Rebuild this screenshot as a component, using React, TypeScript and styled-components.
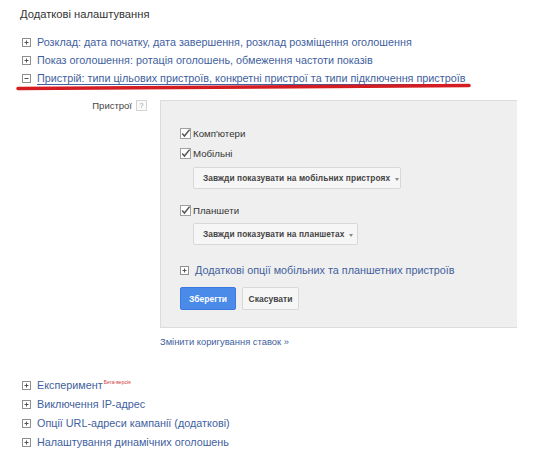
import styled, { createGlobalStyle } from "styled-components";

const Global = createGlobalStyle`
  html, body {
    margin: 0;
    padding: 0;
    background: #ffffff;
    font-family: "Liberation Sans", Arial, sans-serif;
  }
`;

const Page = styled.div`
  position: relative;
  width: 547px;
  height: 450px;
  overflow: hidden;
  padding-top: 6px;
  box-sizing: border-box;
`;

const Heading = styled.div`
  margin-left: 20px;
  font-size: 11.2px;
  line-height: 16px;
  color: #333333;
`;

const List = styled.div<{ $gap: number; $top: number }>`
  display: flex;
  flex-direction: column;
  margin: ${({ $top }) => $top}px 0 0 22px;
  gap: ${({ $gap }) => $gap}px;
`;

const Row = styled.div<{ $top?: number }>`
  display: flex;
  align-items: center;
  gap: 6px;
  height: 18px;
  margin-top: ${({ $top }) => $top ?? 0}px;
  color: #3f5f9e;
  white-space: nowrap;
`;

const RowText = styled.span<{ $under?: boolean }>`
  font-size: 10.8px;
  text-decoration: ${({ $under }) => ($under ? "underline" : "none")};
  text-underline-offset: 2px;
`;

const Beta = styled.sup`
  font-size: 5px;
  color: #d23b3b;
  vertical-align: 5px;
  margin-left: 1px;
`;

const Toggle = styled.span`
  display: inline-flex;
  flex: none;
  width: 9px;
  height: 9px;
`;

const RedLine = styled.svg`
  position: absolute;
  left: 15px;
  top: 82px;
`;

const Devices = styled.div`
  display: grid;
  grid-template-columns: 160px 357px;
  margin-top: 13px;
`;

const Label = styled.div`
  display: flex;
  justify-content: flex-end;
  align-items: flex-start;
  gap: 4px;
  padding-right: 13px;
  font-size: 9.5px;
  line-height: 12px;
  color: #444444;
`;

const Help = styled.span`
  display: inline-flex;
  align-items: center;
  justify-content: center;
  width: 9px;
  height: 9px;
  border: 1px solid #d4d4d4;
  font-size: 7px;
  line-height: 1;
  color: #9a9a9a;
  background: #fafafa;
`;

const Panel = styled.div`
  background: #efefef;
  border: 1px solid #dcdcdc;
  border-right: none;
  height: 228px;
  box-sizing: border-box;
  padding: 22px 0 0 19px;
  display: flex;
  flex-direction: column;
`;

const Check = styled.label<{ $top: number }>`
  display: flex;
  align-items: center;
  gap: 2px;
  height: 20px;
  margin-top: ${({ $top }) => $top}px;
  font-size: 9.7px;
  color: #333333;
`;

const Select = styled.div<{ $w: number; $top: number }>`
  display: flex;
  align-items: center;
  gap: 5px;
  box-sizing: border-box;
  width: ${({ $w }) => $w}px;
  height: 22px;
  margin: ${({ $top }) => $top}px 0 0 13px;
  padding-left: 9px;
  background: #f6f6f6;
  border: 1px solid #d8d8d8;
  border-radius: 2px;
  font-size: 8.3px;
  letter-spacing: 0.1px;
  font-weight: bold;
  color: #444444;
  white-space: nowrap;
`;

const Caret = styled.span`
  width: 0;
  height: 0;
  border-left: 2.5px solid transparent;
  border-right: 2.5px solid transparent;
  border-top: 3px solid #888888;
  margin-top: 2px;
`;

const Buttons = styled.div`
  display: flex;
  gap: 6px;
  margin-top: 8px;
`;

const Button = styled.button<{ $primary?: boolean }>`
  box-sizing: border-box;
  height: 23px;
  width: ${({ $primary }) => ($primary ? 56 : 57)}px;
  padding: 0;
  border-radius: 2px;
  font-family: "Liberation Sans", Arial, sans-serif;
  font-size: 8.5px;
  font-weight: bold;
  border: 1px solid ${({ $primary }) => ($primary ? "#3a7ae0" : "#d8d8d8")};
  background: ${({ $primary }) => ($primary ? "#4a8ae8" : "#f6f6f6")};
  color: ${({ $primary }) => ($primary ? "#ffffff" : "#444444")};
`;

const BidLink = styled.div`
  grid-column: 2;
  margin-top: 8px;
  font-size: 9.4px;
  color: #3f5f9e;
`;

function ToggleIcon({ open }: { open?: boolean }) {
  return (
    <Toggle>
      <svg width="9" height="9" viewBox="0 0 9 9">
        <rect x="0.5" y="0.5" width="8" height="8" fill="#fff" stroke="#8f8f8f" />
        <path d="M2.5 4.5h4" stroke="#555" />
        {!open && <path d="M4.5 2.5v4" stroke="#555" />}
      </svg>
    </Toggle>
  );
}

function CheckBox() {
  return (
    <svg width="11" height="11" viewBox="0 0 11 11">
      <rect x="0.5" y="0.5" width="10" height="10" fill="#fff" stroke="#a0a0a0" />
      <path d="M2.2 5.6 4.4 8 9.6 1.6" fill="none" stroke="#555" strokeWidth="1.5" />
    </svg>
  );
}

export default function App() {
  return (
    <>
      <Global />
      <Page>
        <Heading>Додаткові налаштування</Heading>
        <List $gap={0} $top={11}>
          <Row>
            <ToggleIcon />
            <RowText>Розклад: дата початку, дата завершення, розклад розміщення оголошення</RowText>
          </Row>
          <Row>
            <ToggleIcon />
            <RowText>Показ оголошення: ротація оголошень, обмеження частоти показів</RowText>
          </Row>
          <Row>
            <ToggleIcon open />
            <RowText $under>
              Пристрій: типи цільових пристроїв, конкретні пристрої та типи підключення пристроїв
            </RowText>
          </Row>
        </List>
        <RedLine width="460" height="10" viewBox="0 0 460 10">
          <path d="M3 6.5 C 120 5.5, 300 4.5, 454 3.5" stroke="#d31d22" strokeWidth="3.5" strokeLinecap="round" fill="none" />
        </RedLine>

        <Devices>
          <Label>
            Пристрої
            <Help>?</Help>
          </Label>
          <Panel>
            <Check $top={0}>
              <CheckBox />
              Комп'ютери
            </Check>
            <Check $top={0}>
              <CheckBox />
              Мобільні
            </Check>
            <Select $w={208} $top={4}>
              Завжди показувати на мобільних пристроях
              <Caret />
            </Select>
            <Check $top={11}>
              <CheckBox />
              Планшети
            </Check>
            <Select $w={165} $top={3}>
              Завжди показувати на планшетах
              <Caret />
            </Select>
            <Row $top={16}>
              <ToggleIcon />
              <RowText>Додаткові опції мобільних та планшетних пристроїв</RowText>
            </Row>
            <Buttons>
              <Button $primary>Зберегти</Button>
              <Button>Скасувати</Button>
            </Buttons>
          </Panel>
          <BidLink>Змінити коригування ставок »</BidLink>
        </Devices>

        <List $gap={1} $top={29}>
          <Row>
            <ToggleIcon />
            <RowText>
              Експеримент<Beta>Бета-версія</Beta>
            </RowText>
          </Row>
          <Row>
            <ToggleIcon />
            <RowText>Виключення IP-адрес</RowText>
          </Row>
          <Row>
            <ToggleIcon />
            <RowText>Опції URL-адреси кампанії (додаткові)</RowText>
          </Row>
          <Row>
            <ToggleIcon />
            <RowText>Налаштування динамічних оголошень</RowText>
          </Row>
        </List>
      </Page>
    </>
  );
}
